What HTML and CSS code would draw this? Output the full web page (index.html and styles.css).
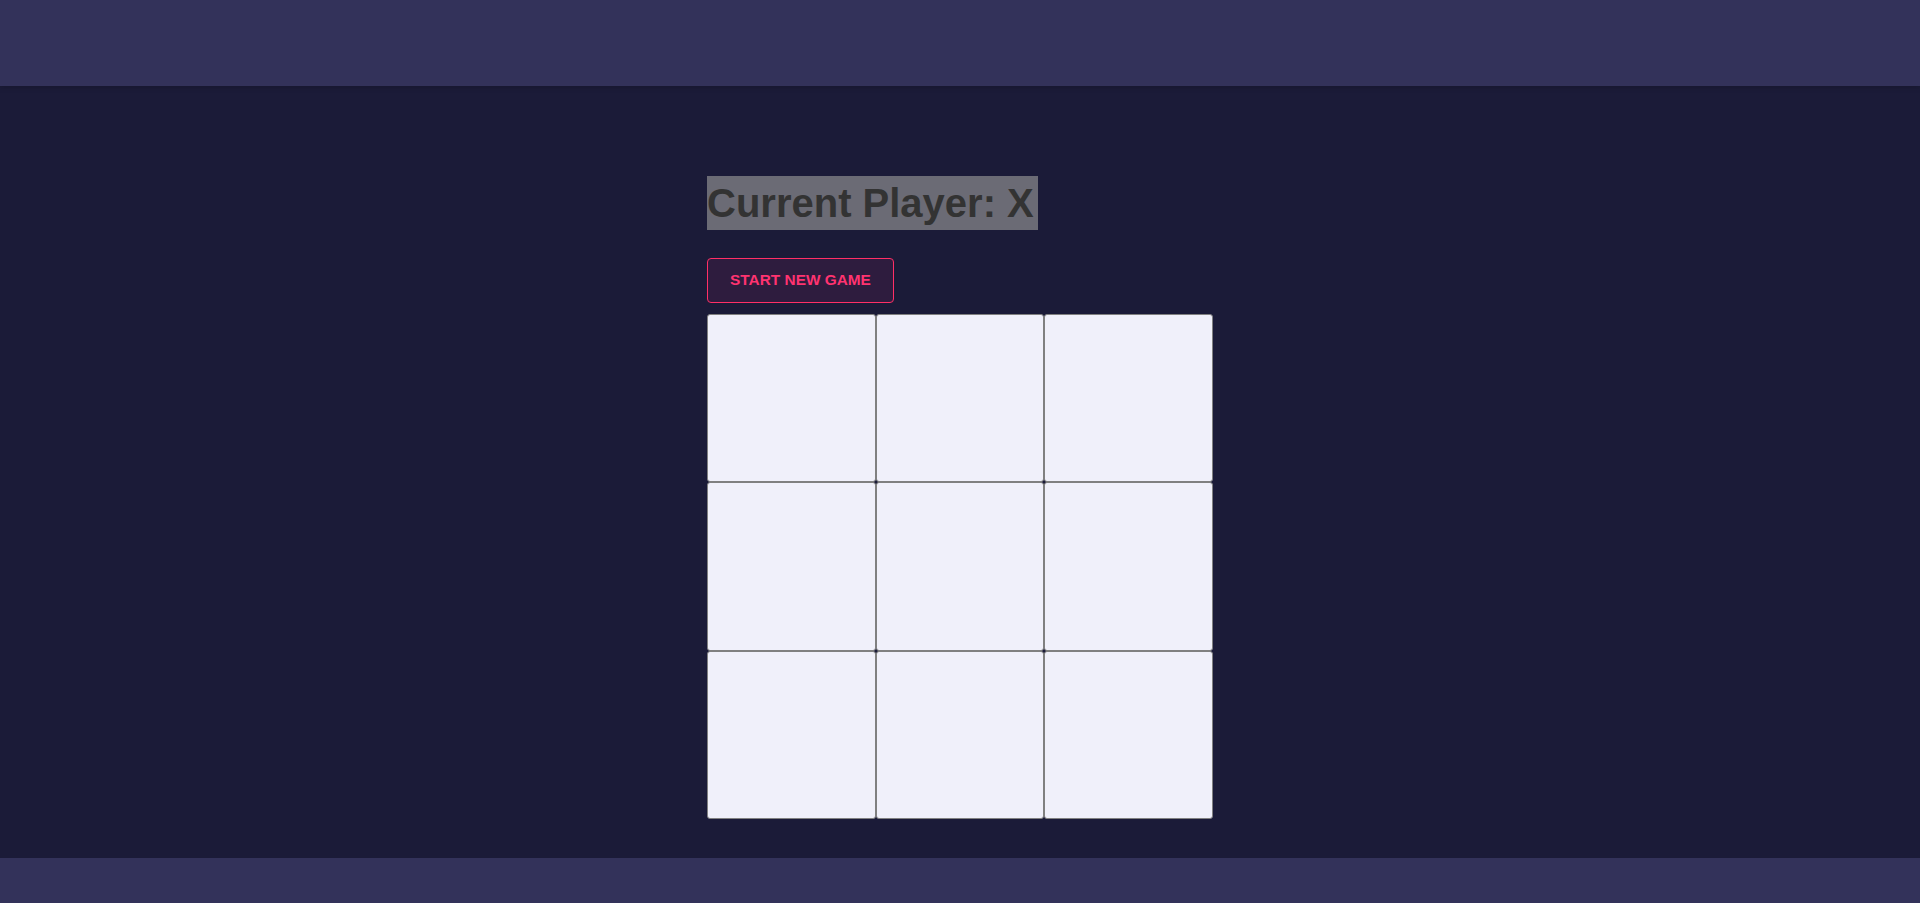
FILE: index.html
```html
<!DOCTYPE html>
<html lang="en">
<head>
<meta charset="utf-8">
<title>Tic Tac Toe</title>
<link rel="stylesheet" href="styles.css">
</head>
<body>
<header class="top-bar"></header>
<main class="main">
  <div class="game">
    <h1 class="status">Current Player: X</h1>
    <div class="controls">
      <button class="new-game">START NEW GAME</button>
    </div>
    <div class="board">
      <div class="cell"></div>
      <div class="cell"></div>
      <div class="cell"></div>
      <div class="cell"></div>
      <div class="cell"></div>
      <div class="cell"></div>
      <div class="cell"></div>
      <div class="cell"></div>
      <div class="cell"></div>
    </div>
  </div>
</main>
<footer class="bottom-bar"></footer>
</body>
</html>
```
FILE: styles.css
```css
* { box-sizing: border-box; }
html, body { margin: 0; padding: 0; }
body {
  min-height: 100vh;
  display: flex;
  flex-direction: column;
  background: #1b1b38;
  font-family: "Liberation Sans", Arial, sans-serif;
}
.top-bar {
  flex: none;
  height: 86px;
  background: #33325a;
  box-shadow: 0 1px 6px rgba(0, 0, 0, 0.18);
  position: relative;
  z-index: 1;
}
.main {
  flex: 1;
  display: flex;
  justify-content: center;
}
.game {
  width: 506px;
  padding-top: 90px;
  display: flex;
  flex-direction: column;
  align-items: flex-start;
}
.status {
  margin: 0;
  font-size: 40px;
  line-height: 54px;
  font-weight: 700;
  color: #333333;
  background: #6b6b75;
  padding-right: 4px;
}
.controls {
  margin-top: 28px;
}
.new-game {
  display: block;
  width: 187px;
  height: 45px;
  padding: 0 0 2px;
  border: 1px solid #ff2f66;
  border-radius: 4px;
  background: #2e1c3e;
  color: #ff3370;
  font-family: "Liberation Sans", Arial, sans-serif;
  font-size: 15.4px;
  font-weight: 700;
  cursor: pointer;
}
.board {
  margin-top: 11px;
  width: 506px;
  height: 505px;
  display: grid;
  grid-template-columns: repeat(3, 1fr);
  grid-template-rows: repeat(3, 1fr);
}
.cell {
  background: #f0f0fa;
  border: 1px solid #808080;
  border-radius: 3px;
}
.bottom-bar {
  flex: none;
  height: 45px;
  background: #33325a;
}
```
